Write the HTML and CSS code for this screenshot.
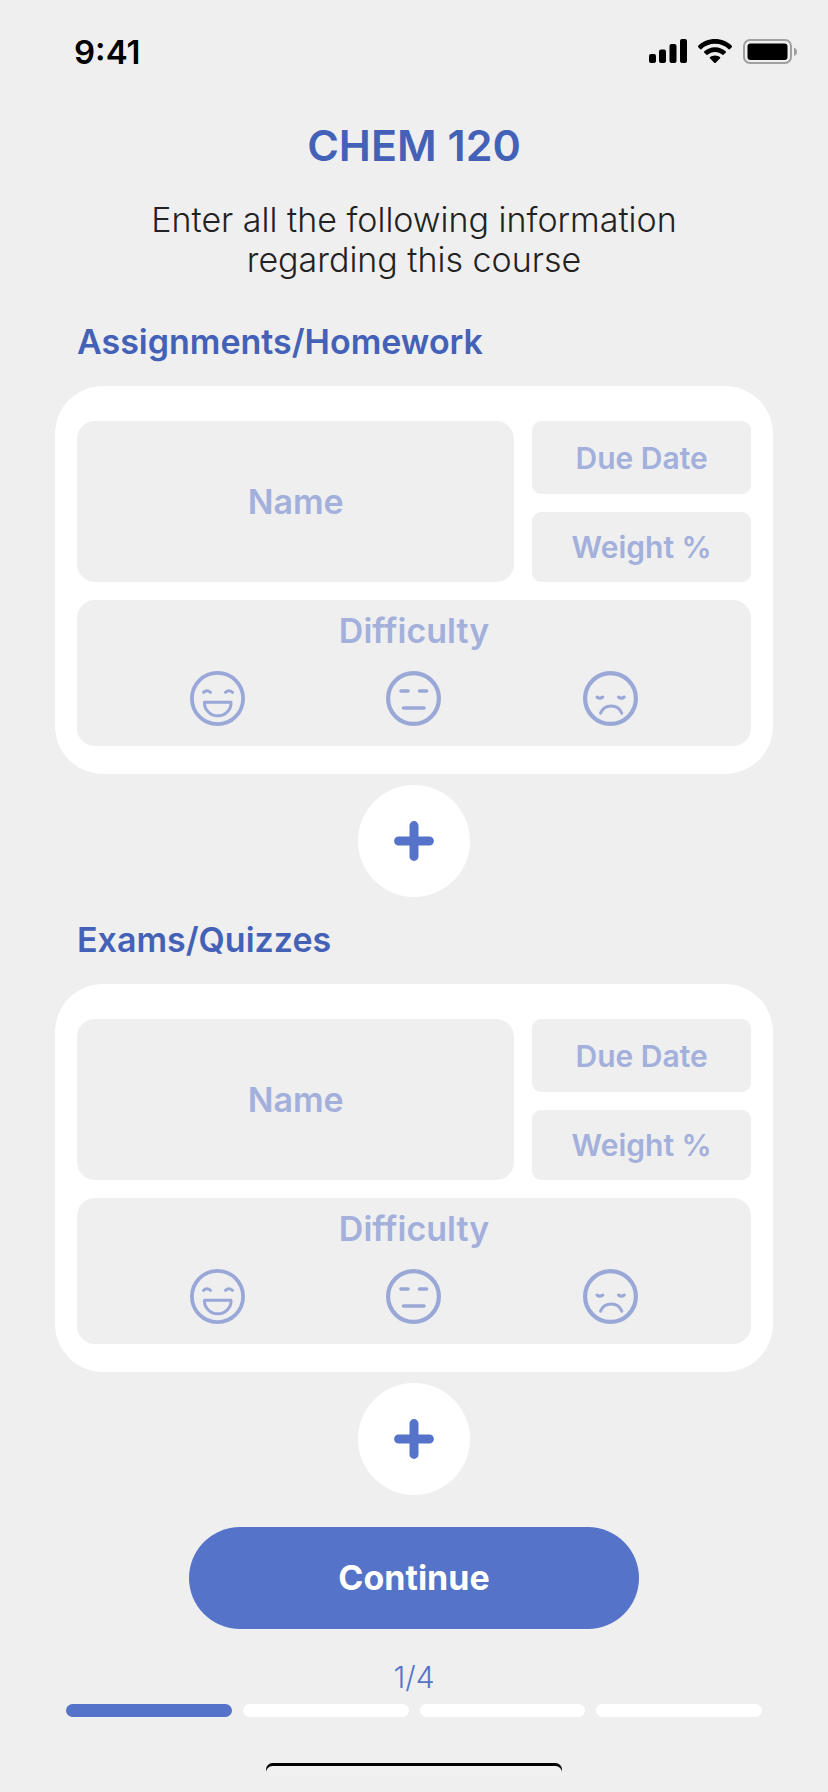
FILE: index.html
```html
<!DOCTYPE html>
<html lang="en">
<head>
<meta charset="utf-8">
<meta name="viewport" content="width=device-width, initial-scale=1">
<title>CHEM 120</title>
<link rel="stylesheet" href="styles.css">
</head>
<body>
<svg class="sprite" aria-hidden="true">
  <symbol id="face-happy" viewBox="0 0 55 55">
    <circle cx="27.500" cy="27.500" r="25.600" stroke-width="3.800"/>
    <path d="M13.500 21.300q3.300-3.200 7 0M35.500 21.300q3.300-3.200 7 0" stroke-width="3"/>
    <path d="M14.500 31.300h26.500c.5 7-5.500 13.500-13.200 13.500S14 38.300 14.500 31.300z" stroke-width="3"/>
  </symbol>
  <symbol id="face-neutral" viewBox="0 0 55 55">
    <circle cx="27.500" cy="27.500" r="25.400" stroke-width="4.200"/>
    <path d="M15 20h7M33.500 20h7M17.500 37h20.500" stroke-width="3.600"/>
  </symbol>
  <symbol id="face-sad" viewBox="0 0 55 55">
    <circle cx="27.500" cy="27.500" r="25.400" stroke-width="4.200"/>
    <path d="M14 26q2.800 2.400 5.800 0M35.500 26q2.800 2.400 5.800 0M17.500 42.200c4-9.600 17.500-9.600 21.300 0" stroke-width="3"/>
  </symbol>
  <symbol id="plus" viewBox="0 0 40 40">
    <path d="M20 4.600v30.800M4.600 20h30.800" stroke-width="9"/>
  </symbol>
</svg>

<header class="status">
  <span class="status-time">9:41</span>
  <div class="status-icons">
    <svg width="38" height="25" viewBox="0 0 38 25"><rect x="0" y="15" width="7" height="9" rx="2"/><rect x="10" y="10.500" width="7" height="13.500" rx="2"/><rect x="20.500" y="5" width="7" height="19" rx="2"/><rect x="31" y="0" width="7" height="24" rx="2"/></svg>
    <svg width="34" height="25" viewBox="0 0 34 25"><path d="M17 0c6.500 0 12.500 2.500 17 6.900.3.300.3.700 0 1L31.700 10.200c-.3.300-.7.300-1 0C27 6.700 22.200 4.800 17 4.800S7 6.700 3.300 10.200c-.3.300-.7.300-1 0L0 7.900c-.3-.3-.3-.7 0-1C4.500 2.500 10.500 0 17 0z"/><path d="M17 8.200c4.200 0 8 1.600 10.900 4.300.3.300.3.700 0 1l-2.400 2.300c-.3.300-.7.300-1 0-2-1.800-4.700-2.900-7.500-2.900s-5.500 1.100-7.500 2.900c-.3.300-.7.300-1 0l-2.400-2.300c-.3-.3-.3-.7 0-1C9 9.800 12.800 8.200 17 8.200z"/><path d="M17 16.400c2 0 3.800.7 5.100 1.800.3.300.3.700 0 1l-4.600 4.700c-.3.300-.7.300-1 0l-4.600-4.700c-.3-.3-.3-.7 0-1 1.300-1.100 3.100-1.800 5.100-1.800z"/></svg>
    <svg width="54" height="25" viewBox="0 0 54 25"><rect x="1" y="1" width="47" height="23" rx="6" fill="none" stroke="#a0a0a0" stroke-width="2"/><rect x="4.500" y="4.500" width="40" height="16.500" rx="3"/><path d="M51 8.500q3 1.200 3 4.300t-3 4.300z" fill="#a0a0a0"/></svg>
  </div>
</header>

<main class="page">
  <h1 class="title">CHEM 120</h1>
  <p class="intro">Enter all the following information regarding this course</p>

  <section class="group">
    <h2 class="group-title">Assignments/Homework</h2>
    <div class="card">
      <input class="field field-name" type="text" placeholder="Name" aria-label="Assignment name">
      <input class="field field-small" type="text" placeholder="Due Date" aria-label="Assignment due date">
      <input class="field field-small" type="text" placeholder="Weight %" aria-label="Assignment weight in percent">
      <div class="difficulty" role="radiogroup" aria-labelledby="hw-difficulty">
        <span class="difficulty-title" id="hw-difficulty">Difficulty</span>
        <div class="faces">
          <label class="face"><input class="face-input" type="radio" name="hw" aria-label="Easy"><svg class="face-icon"><use href="#face-happy"/></svg></label>
          <label class="face"><input class="face-input" type="radio" name="hw" aria-label="Medium"><svg class="face-icon"><use href="#face-neutral"/></svg></label>
          <label class="face"><input class="face-input" type="radio" name="hw" aria-label="Hard"><svg class="face-icon"><use href="#face-sad"/></svg></label>
        </div>
      </div>
    </div>
    <button class="add" type="button" aria-label="Add assignment"><svg class="add-icon"><use href="#plus"/></svg></button>
  </section>

  <section class="group">
    <h2 class="group-title">Exams/Quizzes</h2>
    <div class="card">
      <input class="field field-name" type="text" placeholder="Name" aria-label="Exam name">
      <input class="field field-small" type="text" placeholder="Due Date" aria-label="Exam due date">
      <input class="field field-small" type="text" placeholder="Weight %" aria-label="Exam weight in percent">
      <div class="difficulty" role="radiogroup" aria-labelledby="exam-difficulty">
        <span class="difficulty-title" id="exam-difficulty">Difficulty</span>
        <div class="faces">
          <label class="face"><input class="face-input" type="radio" name="exam" aria-label="Easy"><svg class="face-icon"><use href="#face-happy"/></svg></label>
          <label class="face"><input class="face-input" type="radio" name="exam" aria-label="Medium"><svg class="face-icon"><use href="#face-neutral"/></svg></label>
          <label class="face"><input class="face-input" type="radio" name="exam" aria-label="Hard"><svg class="face-icon"><use href="#face-sad"/></svg></label>
        </div>
      </div>
    </div>
    <button class="add" type="button" aria-label="Add exam"><svg class="add-icon"><use href="#plus"/></svg></button>
  </section>

  <button class="continue" type="button">Continue</button>

  <p class="step-count">1/4</p>
  <div class="steps">
    <span class="step step-done"></span>
    <span class="step"></span>
    <span class="step"></span>
    <span class="step"></span>
  </div>
  <div class="home-bar"></div>
</main>
</body>
</html>
```
FILE: styles.css
```css
* { box-sizing: border-box; }

body {
  margin: 0;
  background: #efefef;
  color: #222;
  font-family: Inter, "Liberation Sans", sans-serif;
  font-size: 34px;
  line-height: 40px;
}

.sprite { display: none; }

symbol {
  fill: none;
  stroke: currentColor;
  stroke-linecap: round;
  stroke-linejoin: round;
}

.status {
  display: flex;
  justify-content: space-between;
  padding: 32px 31px 0 74px;
  color: #000;
}

.status-time {
  font-size: 33px;
  font-weight: 600;
}

.status-icons {
  display: flex;
  align-items: center;
  gap: 11px;
  padding-bottom: 2px;
}

.page {
  display: flex;
  flex-direction: column;
  padding: 49px 55px 16px;
}

.title {
  margin: 0;
  color: #4461b8;
  font-size: 43px;
  font-weight: 600;
  line-height: 48px;
  text-align: center;
}

.intro {
  max-width: 600px;
  margin: 31px auto 42px;
  font-weight: 300;
  text-align: center;
}

.group {
  display: flex;
  flex-direction: column;
  margin-bottom: 23px;
}

.group-title {
  margin: 0 22px 24px;
  color: #4461b8;
  font-size: 34px;
  font-weight: 600;
}

.card {
  display: grid;
  grid-template-columns: 2fr 1fr;
  grid-template-rows: 73px 70px;
  gap: 18px;
  padding: 35px 22px 28px;
  border-radius: 48px;
  background: #fff;
}

.field {
  width: 100%;
  min-width: 0;
  padding: 0 16px;
  border: 0;
  background: #efefef;
  color: #4461b8;
  font: inherit;
  font-weight: 600;
  text-align: center;
}

.field::placeholder {
  color: #a3b0dc;
  opacity: 1;
}

.field-name {
  grid-row: span 2;
  border-radius: 18px;
}

.field-small {
  border-radius: 9px;
  font-size: 30px;
}

.difficulty {
  display: flex;
  flex-direction: column;
  grid-column: span 2;
  gap: 20px;
  padding: 11px 42px 20px;
  border-radius: 18px;
  background: #efefef;
}

.difficulty-title {
  color: #a3b0dc;
  font-weight: 600;
  text-align: center;
}

.faces {
  display: grid;
  grid-template-columns: repeat(3, 1fr);
  justify-items: center;
}

.face {
  display: flex;
  position: relative;
  border-radius: 50%;
  color: #9aa8d8;
  cursor: pointer;
}

.face-input {
  position: absolute;
  inset: 0;
  width: 100%;
  height: 100%;
  margin: 0;
  opacity: 0;
}

.face:has(.face-input:checked) { color: #4461b8; }

.face-icon {
  width: 55px;
  height: 55px;
}

.add {
  display: grid;
  place-items: center;
  align-self: center;
  width: 112px;
  height: 112px;
  margin-top: 11px;
  padding: 0;
  border: 0;
  border-radius: 50%;
  background: #fff;
  color: #5573c9;
}

.add-icon {
  width: 40px;
  height: 40px;
}

.continue {
  align-self: center;
  width: 450px;
  max-width: 100%;
  margin-top: 9px;
  padding: 31px;
  border: 0;
  border-radius: 51px;
  background: #5573c9;
  color: #fff;
  font: inherit;
  font-weight: 700;
}

.step-count {
  margin: 28px 0 7px;
  color: #5573c9;
  font-size: 30px;
  font-weight: 300;
  text-align: center;
}

.steps {
  display: grid;
  grid-template-columns: repeat(4, 1fr);
  gap: 11px;
  padding: 0 11px;
}

.step {
  height: 13px;
  border-radius: 7px;
  background: #fff;
}

.step-done { background: #5573c9; }

.home-bar {
  align-self: center;
  width: 296px;
  height: 13px;
  margin-top: 46px;
  border-radius: 7px;
  background: #f1f1f1;
  box-shadow: inset 0 3px 0 #000;
}
```
